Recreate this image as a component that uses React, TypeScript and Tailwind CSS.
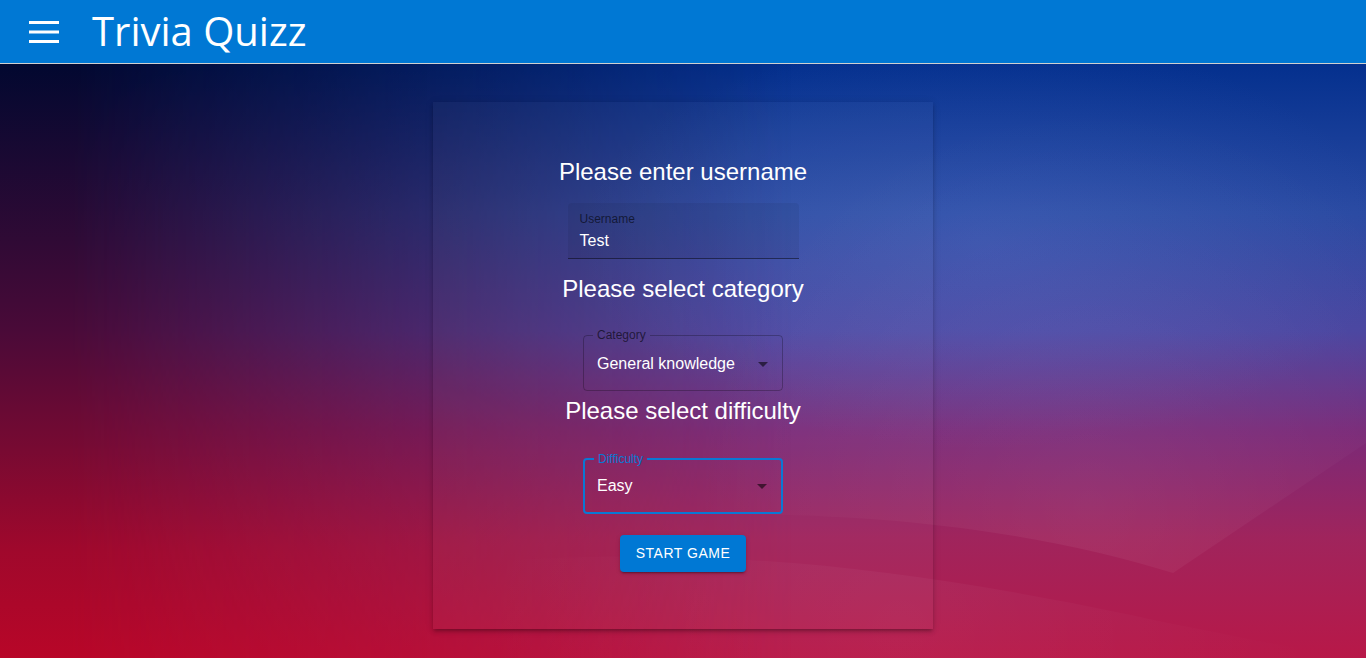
import React from "react"

function MenuIcon() {
  return (
    <svg width="30" height="22" viewBox="0 0 30 22" aria-hidden="true">
      <rect x="0" y="0" width="30" height="3" fill="white" />
      <rect x="0" y="9.5" width="30" height="3" fill="white" />
      <rect x="0" y="19" width="30" height="3" fill="white" />
    </svg>
  )
}

function ArrowDrop() {
  return (
    <svg width="24" height="24" viewBox="0 0 24 24" className="fill-black/55" aria-hidden="true">
      <path d="M7 10l5 5 5-5z" />
    </svg>
  )
}

function OutlinedSelect({ label, value, focused }: { label: string; value: string; focused?: boolean }) {
  return (
    <fieldset
      className={
        "m-0 w-[200px] rounded-[4px] p-0 " +
        (focused ? "border-2 border-[#0a78d4]" : "border border-black/25")
      }
    >
      <legend
        className={
          "ml-[9px] px-[4px] text-[12px] leading-[12px] " + (focused ? "text-[#0a78d4]" : "text-black/60")
        }
      >
        {label}
      </legend>
      <div
        className={
          "flex items-center justify-between pr-[7px] " +
          (focused ? "h-[47px] pb-[5px] pl-[12px]" : "h-[49px] pb-[3px] pl-[13px]")
        }
      >
        <span className="text-[16px] text-white">{value}</span>
        <ArrowDrop />
      </div>
    </fieldset>
  )
}

// faint wave shape in the lower right of the backdrop
function Wave() {
  return (
    <svg className="pointer-events-none absolute inset-0 h-full w-full" viewBox="0 0 1366 594" preserveAspectRatio="none" aria-hidden="true">
      <defs>
        <radialGradient id="glow" cx="1090" cy="440" r="400" gradientUnits="userSpaceOnUse">
          <stop offset="0" stopColor="white" stopOpacity="0.06" />
          <stop offset="1" stopColor="white" stopOpacity="0" />
        </radialGradient>
        <radialGradient id="glow2" cx="900" cy="560" r="420" gradientUnits="userSpaceOnUse">
          <stop offset="0" stopColor="white" stopOpacity="0.04" />
          <stop offset="1" stopColor="white" stopOpacity="0" />
        </radialGradient>
      </defs>
      <path d="M450 470 C 750 430, 1000 455, 1173 509 L 1366 379 L 1366 0 L 450 0 Z" fill="url(#glow)" />
      <path d="M450 500 C 700 480, 900 500, 1173 560 C 1250 575, 1320 590, 1366 594 L 450 594 Z" fill="url(#glow2)" />
    </svg>
  )
}

export default function App() {
  return (
    <div className="flex min-h-screen flex-col font-['Liberation_Sans',Arial,sans-serif]">
      <header className="flex h-16 items-center gap-[33px] border-b border-[#d0d0d0] bg-[#0078d4] pl-[29px]">
        <MenuIcon />
        <h1 className="-mt-[2px] font-['Open_Sans',sans-serif] text-[40px] leading-none text-white">Trivia Quizz</h1>
      </header>
      <main className="relative flex flex-1 justify-center bg-[radial-gradient(ellipse_30%_35%_at_72%_30%,rgba(110,140,230,0.18),transparent),linear-gradient(to_bottom,#04308e_0%,#2a4aa2_25%,#4a45a0_45%,#7a2a78_62%,#a0245c_80%,#b81848_100%)] pt-[38px] pb-[29px]">
        <div className="pointer-events-none absolute inset-0 bg-[linear-gradient(to_bottom,#020830_0%,#300a35_30%,#4a0a38_45%,#780a32_65%,#a0082c_82%,#b80628_100%)] [mask-image:linear-gradient(to_right,black_0%,black_5%,transparent_58%)]" />
        <Wave />
        <section className="relative flex h-[527px] w-[500px] flex-col items-center bg-white/[0.03] pt-[54px] shadow-[0_3px_3px_-2px_rgba(0,0,0,0.2),0_3px_4px_0_rgba(0,0,0,0.14),0_1px_8px_0_rgba(0,0,0,0.12)]">
          <h2 className="text-[24px] leading-8 text-white">Please enter username</h2>
          <div className="mt-[15px] flex h-[56px] w-[231px] flex-col rounded-t-[4px] border-b border-black/45 bg-black/[0.06] px-3 pt-[10px]">
            <span className="text-[12px] leading-[13px] text-black/60">Username</span>
            <span className="mt-[5px] text-[16px] leading-[19px] text-white">Test</span>
          </div>
          <h2 className="mt-[14px] text-[24px] leading-8 text-white">Please select category</h2>
          <div className="mt-[24px]">
            <OutlinedSelect label="Category" value="General knowledge" />
          </div>
          <h2 className="mt-[4px] text-[24px] leading-8 text-white">Please select difficulty</h2>
          <div className="mt-[26px]">
            <OutlinedSelect label="Difficulty" value="Easy" focused />
          </div>
          <button className="mt-[21px] h-[37px] w-[126px] rounded-[4px] bg-[#0078d4] text-[14px] tracking-[0.5px] text-white shadow-[0_3px_1px_-2px_rgba(0,0,0,0.2),0_2px_2px_0_rgba(0,0,0,0.14),0_1px_5px_0_rgba(0,0,0,0.12)]">
            START GAME
          </button>
        </section>
      </main>
    </div>
  )
}
